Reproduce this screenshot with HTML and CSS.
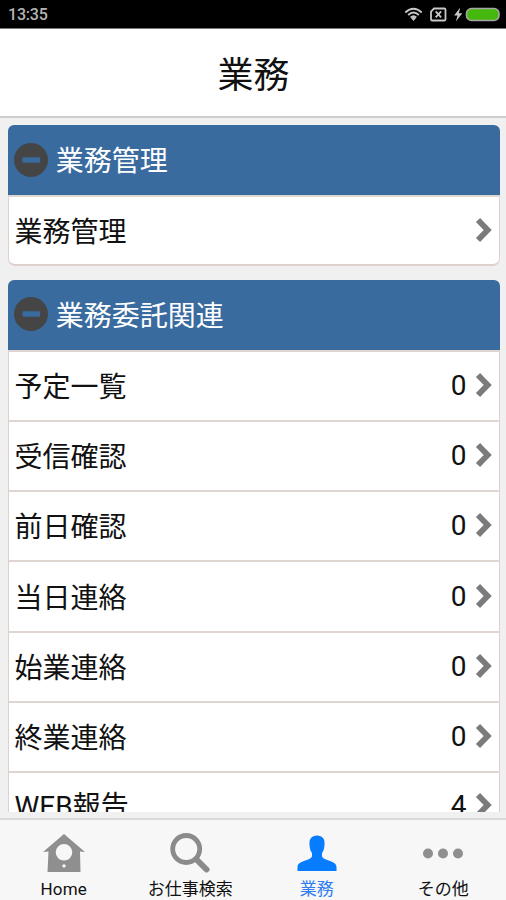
FILE: index.html
```html
<!DOCTYPE html>
<html lang="ja">
<head>
<meta charset="utf-8">
<title>業務</title>
<link rel="stylesheet" href="styles.css">
</head>
<body>
<svg class="defs" width="0" height="0">
  <symbol id="chevron" viewBox="0 0 18 26"><path d="M3 3 12.700 13 3 23" fill="none" stroke="#7b7b7b" stroke-width="5.800"/></symbol>
  <symbol id="minus" viewBox="0 0 34 34"><circle cx="17" cy="17" r="17" fill="#454545"/><rect x="8.500" y="14.300" width="17.500" height="5.400" rx="1" fill="#3a6b9f"/></symbol>
</svg>
<div class="app">
  <div class="status">
    <span class="clock">13:35</span>
    <svg class="status-icons" width="104" height="28" viewBox="0 0 104 28">
      <g fill="none" stroke="#c8c8c8" stroke-width="1.800">
        <path d="M3.300 12.500Q11.500 5 19.700 12.500M6.200 15Q11.500 10 16.800 15M8.700 17.500Q11.500 15 14.300 17.500"/>
        <path d="M32 8.500h10.200q1.300 0 1.300 1.300v9.400q0 1.300-1.300 1.300H30.300q-1.300 0-1.300-1.300V11.500z"/>
        <path d="m33.700 11.300 5.400 6M39.100 11.300l-5.400 6"/>
      </g>
      <path d="m9 18 2.500-1.200L14 18l-2.500 3z" fill="#c8c8c8"/>
      <path d="m58.300 7.500-6.200 8h3.500l-1.800 6 6.600-8.300h-3.600z" fill="#c8c8c8"/>
      <rect x="64.500" y="8.500" width="32.500" height="12" rx="5" fill="#44b80c" stroke="#a6a6a6" stroke-width="1.600"/>
    </svg>
  </div>
  <header class="header"><h1>業務</h1></header>
  <main class="content">
    <section class="card">
      <h2 class="card-head"><svg class="minus"><use href="#minus"/></svg><span>業務管理</span></h2>
      <div class="row"><span class="label">業務管理</span><svg class="chevron"><use href="#chevron"/></svg></div>
    </section>
    <section class="card">
      <h2 class="card-head"><svg class="minus"><use href="#minus"/></svg><span>業務委託関連</span></h2>
      <div class="row"><span class="label">予定一覧</span><span>0</span><svg class="chevron"><use href="#chevron"/></svg></div>
      <div class="row"><span class="label">受信確認</span><span>0</span><svg class="chevron"><use href="#chevron"/></svg></div>
      <div class="row"><span class="label">前日確認</span><span>0</span><svg class="chevron"><use href="#chevron"/></svg></div>
      <div class="row"><span class="label">当日連絡</span><span>0</span><svg class="chevron"><use href="#chevron"/></svg></div>
      <div class="row"><span class="label">始業連絡</span><span>0</span><svg class="chevron"><use href="#chevron"/></svg></div>
      <div class="row"><span class="label">終業連絡</span><span>0</span><svg class="chevron"><use href="#chevron"/></svg></div>
      <div class="row last"><span class="label">WEB報告</span><span>4</span><svg class="chevron"><use href="#chevron"/></svg></div>
    </section>
  </main>
  <nav class="tabs">
    <div class="tab">
      <svg class="tab-icon" viewBox="0 0 48 48"><path fill="#8f8f8f" fill-rule="evenodd" d="M24 5 45 23l-5-.5L40.500 43h-33L8.500 22.500 3 23zM24 15a8.300 8.300 0 1 0 0 16.600 8.300 8.300 0 0 0 0-16.600zM24 35.200a1.700 1.700 0 1 0 0 3.400 1.700 1.700 0 0 0 0-3.400z"/></svg>
      <span class="latin">Home</span>
    </div>
    <div class="tab">
      <svg class="tab-icon" viewBox="0 0 48 48"><g fill="none" stroke="#8b8b8b"><circle cx="20.200" cy="20" r="13.500" stroke-width="4.800"/><path d="m30.500 30.500 10 10" stroke-width="6" stroke-linecap="round"/></g></svg>
      <span>お仕事検索</span>
    </div>
    <div class="tab active">
      <svg class="tab-icon" viewBox="0 0 48 48"><path fill="#087cff" d="M24 6.500c5.500 0 8 3.500 7.500 9-.2 4-1 6.500-2.500 8.500v3.500c1 2 3 2.800 6 3.800 6 2 8.500 3.500 8.500 7V42h-39v-3.700c0-3.500 2.500-5 8.500-7 3-1 5-1.800 6-3.800V24c-1.500-2-2.300-4.500-2.500-8.500-.5-5.500 2-9 7.500-9z"/></svg>
      <span>業務</span>
    </div>
    <div class="tab">
      <svg class="tab-icon" viewBox="0 0 48 48"><g fill="#8f8f8f"><circle cx="9" cy="24.500" r="5"/><circle cx="24" cy="24.500" r="5"/><circle cx="39" cy="24.500" r="5"/></g></svg>
      <span>その他</span>
    </div>
  </nav>
</div>
</body>
</html>
```
FILE: styles.css
```css
* { box-sizing: border-box; }
body { margin: 0; font-family: Roboto, "Noto Sans CJK JP", sans-serif; color: #111; }
.defs { display: block; }
.app { height: 900px; display: flex; flex-direction: column; overflow: hidden; background: #f0f0f0; }
.status { height: 28px; flex: none; background: #000; display: flex; align-items: center; justify-content: space-between; padding-left: 8px; }
.clock { color: #b4b4b4; font-size: 16px; line-height: 28px; padding-top: 2px; font-weight: 500; letter-spacing: -0.2px; }
.status-icons { display: block; }
.header { height: 90px; flex: none; background: #fff; border-top: 1px solid #777; border-bottom: 2px solid #cdcdcd; display: flex; align-items: center; justify-content: center; }
.header h1 { margin: 0; padding: 7px 0 0 1px; font-size: 36px; line-height: 40px; font-weight: 400; }
.content { height: 694px; flex: none; overflow: hidden; padding: 7px 6.500px 0 7.500px; display: flex; flex-direction: column; gap: 13.5px; }
.card { flex: none; border-radius: 6px; overflow: hidden; }
.card-head { margin: 0; height: 70px; background: #3a6b9f; color: #fff; font-size: 28px; line-height: 40px; font-weight: 400; display: flex; align-items: center; gap: 8px; padding: 0 0 1px 6.300px; }
.card-head span { padding-top: 5px; }
.minus { width: 34px; height: 34px; }
.row { height: 70.3px; border: 1.500px solid #dfd0cb; border-width: 2px 1.500px 0; border-top-color: #dfd5d1; background: #fff; display: flex; align-items: center; font-size: 28px; line-height: 40px; padding: 0 6px; }
.card:first-child .row { height: 71px; border-bottom-width: 2px; border-radius: 0 0 7px 7px; }
.label { flex: 1; padding-top: 4px; }
.last { padding-bottom: 2px; }
.last .label { padding-top: 1px; }
.chevron { width: 18px; height: 26px; margin: 0 0 2px 8px; }
.tabs { height: 82px; margin-top: 6px; flex: none; border-top: 2px solid #dadada; background: #f7f7f7; display: grid; grid-template-columns: repeat(4, 1fr); }
.tab { display: flex; flex-direction: column; align-items: center; padding: 9px 0 0 1px; font-size: 17px; line-height: 25px; }
.tab-icon { width: 48px; height: 48px; }
.latin { letter-spacing: 0.2px; }
.active { color: #2f7df2; }
```
